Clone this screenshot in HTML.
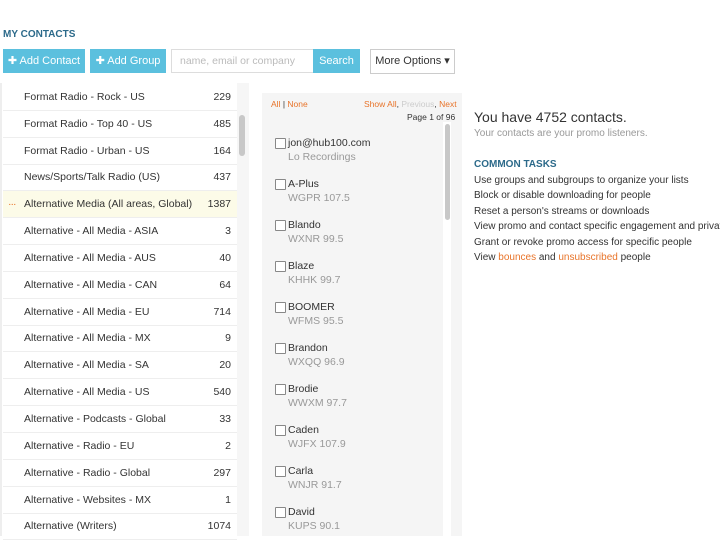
<!DOCTYPE html><html><head><style>
body{margin:0;width:720px;height:536px;overflow:hidden;background:#fff;font-family:"Liberation Sans",sans-serif;position:relative;color:#333}
.a{position:absolute}
h1{position:absolute;left:3px;top:29px;margin:0;font-size:10px;font-weight:bold;color:#2c6a8a}
.btn{position:absolute;top:49px;height:24px;background:#5bc0de;color:#fff;font-size:11px;line-height:24px;text-align:center}
.row{position:absolute;left:3px;width:234px;height:26px;border-bottom:1px solid #eee;font-size:10.5px;line-height:26px}
.row span{position:absolute;left:21px}.row b{position:absolute;right:6px;font-weight:normal}
.c{position:absolute;left:275px;font-size:10.5px}
.c i{position:absolute;left:0;top:1px;width:9px;height:9px;border:1px solid #888;border-radius:1px;background:#fff}
.c span{position:absolute;left:13px;white-space:nowrap}
.c em{position:absolute;left:13px;top:14px;font-style:normal;color:#999;white-space:nowrap}
.r{position:absolute;left:474px;font-size:10px;white-space:nowrap}
.o{color:#e8742a}
</style></head><body>
<h1>MY CONTACTS</h1>
<div class="btn" style="left:3px;width:82px">✚ Add Contact</div>
<div class="btn" style="left:90px;width:76px">✚ Add Group</div>
<div class="a" style="left:171px;top:49px;height:22px;border:1px solid #ddd;font-size:10.5px;line-height:22px;color:#bbb;padding-left:8px;width:133px">name, email or company</div>
<div class="btn" style="left:313px;width:47px">Search</div>
<div class="a" style="left:370px;top:49px;width:83px;height:23px;border:1px solid #ccc;font-size:11px;line-height:23px;text-align:center">More Options ▾</div>
<div class="a" style="left:0;top:83px;width:2px;height:453px;background:#eee"></div>
<div class="a" style="left:237px;top:83px;width:12px;height:453px;background:#f6f6f6"></div>
<div class="a" style="left:239px;top:115px;width:6px;height:41px;border-radius:3px;background:#c8c8c8"></div>
<div class="row" style="top:84px"><span>Format Radio - Rock - US</span><b>229</b></div>
<div class="row" style="top:111px"><span>Format Radio - Top 40 - US</span><b>485</b></div>
<div class="row" style="top:138px"><span>Format Radio - Urban - US</span><b>164</b></div>
<div class="row" style="top:164px"><span>News/Sports/Talk Radio (US)</span><b>437</b></div>
<div class="row" style="top:191px;background:#fcfbe8"><span style="left:5px;color:#e8742a;letter-spacing:-1px">···</span><span>Alternative Media (All areas, Global)</span><b>1387</b></div>
<div class="row" style="top:218px"><span>Alternative - All Media - ASIA</span><b>3</b></div>
<div class="row" style="top:245px"><span>Alternative - All Media - AUS</span><b>40</b></div>
<div class="row" style="top:272px"><span>Alternative - All Media - CAN</span><b>64</b></div>
<div class="row" style="top:299px"><span>Alternative - All Media - EU</span><b>714</b></div>
<div class="row" style="top:325px"><span>Alternative - All Media - MX</span><b>9</b></div>
<div class="row" style="top:352px"><span>Alternative - All Media - SA</span><b>20</b></div>
<div class="row" style="top:379px"><span>Alternative - All Media - US</span><b>540</b></div>
<div class="row" style="top:406px"><span>Alternative - Podcasts - Global</span><b>33</b></div>
<div class="row" style="top:433px"><span>Alternative - Radio - EU</span><b>2</b></div>
<div class="row" style="top:460px"><span>Alternative - Radio - Global</span><b>297</b></div>
<div class="row" style="top:487px"><span>Alternative - Websites - MX</span><b>1</b></div>
<div class="row" style="top:513px"><span>Alternative (Writers)</span><b>1074</b></div>
<div class="a" style="left:262px;top:93px;width:200px;height:443px;background:#f5f5f5"></div>
<div class="a o" style="left:271px;top:99px;font-size:8.5px">All <span style="color:#333">|</span> None</div>
<div class="a" style="left:364px;top:99px;font-size:8.5px"><span class="o">Show All</span>, <span style="color:#ccc">Previous</span>, <span class="o">Next</span></div>
<div class="a" style="left:407px;top:112px;font-size:8.5px">Page 1 of 96</div>
<div class="a" style="left:443px;top:122px;width:8px;height:414px;background:#fff"></div>
<div class="a" style="left:445px;top:124px;width:5px;height:96px;border-radius:3px;background:#c8c8c8"></div>
<div class="c" style="top:137px"><i></i><span>jon@hub100.com</span><em>Lo Recordings</em></div>
<div class="c" style="top:178px"><i></i><span>A-Plus</span><em>WGPR 107.5</em></div>
<div class="c" style="top:219px"><i></i><span>Blando</span><em>WXNR 99.5</em></div>
<div class="c" style="top:260px"><i></i><span>Blaze</span><em>KHHK 99.7</em></div>
<div class="c" style="top:301px"><i></i><span>BOOMER</span><em>WFMS 95.5</em></div>
<div class="c" style="top:342px"><i></i><span>Brandon</span><em>WXQQ 96.9</em></div>
<div class="c" style="top:383px"><i></i><span>Brodie</span><em>WWXM 97.7</em></div>
<div class="c" style="top:424px"><i></i><span>Caden</span><em>WJFX 107.9</em></div>
<div class="c" style="top:465px"><i></i><span>Carla</span><em>WNJR 91.7</em></div>
<div class="c" style="top:506px"><i></i><span>David</span><em>KUPS 90.1</em></div>
<div class="r" style="top:109px;font-size:14px">You have 4752 contacts.</div>
<div class="r" style="top:128px;color:#999">Your contacts are your promo listeners.</div>
<div class="r" style="top:159px;font-weight:bold;color:#2c6a8a">COMMON TASKS</div>
<div class="r" style="top:175px">Use groups and subgroups to organize your lists</div>
<div class="r" style="top:190px">Block or disable downloading for people</div>
<div class="r" style="top:206px">Reset a person's streams or downloads</div>
<div class="r" style="top:221px">View promo and contact specific engagement and private</div>
<div class="r" style="top:237px">Grant or revoke promo access for specific people</div>
<div class="r" style="top:252px">View <span class="o">bounces</span> and <span class="o">unsubscribed</span> people</div>
</body></html>
